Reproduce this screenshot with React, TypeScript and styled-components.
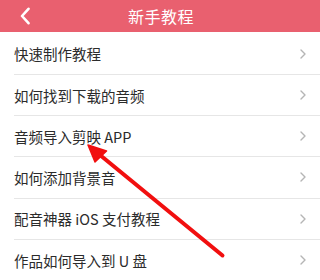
import React from "react";
import styled, { createGlobalStyle } from "styled-components";

const Global = createGlobalStyle`
  html, body { margin: 0; padding: 0; background: #fff; }
  body { font-family: "Noto Sans CJK SC", "Noto Sans", sans-serif; }
`;

const Page = styled.div`
  position: relative;
  width: 320px;
  height: 280px;
  overflow: hidden;
  background: #fff;
`;

const Header = styled.header`
  height: 32px;
  background: #e9606f;
  display: flex;
  align-items: center;
  justify-content: center;
  position: relative;
`;

const BackButton = styled.button`
  position: absolute;
  left: 14px;
  top: 4px;
  width: 22px;
  height: 24px;
  border: 0;
  padding: 0;
  background: transparent;
  display: flex;
  align-items: center;
  justify-content: center;
`;

const Title = styled.h1`
  margin: 0;
  color: #fff;
  font-size: 16px;
  font-weight: 400;
  letter-spacing: 0.5px;
  padding-left: 2px;
`;

const List = styled.ul`
  list-style: none;
  margin: 0;
  padding: 1.5px 0 0 0;
`;

const Row = styled.li`
  height: 40.25px;
  margin-left: 14px;
  padding-right: 13px;
  border-bottom: 1px solid #e6e6e6;
  display: flex;
  align-items: center;
  justify-content: space-between;
`;

const Label = styled.span`
  color: #2b2b2b;
  font-size: 14.5px;
  line-height: 1;
  padding-top: 2px;
`;

const ArrowOverlay = styled.svg`
  position: absolute;
  left: 0;
  top: 0;
  pointer-events: none;
`;

const Chevron = () => (
  <svg width="8" height="12" viewBox="0 0 8 12">
    <path d="M2 2 L6 6 L2 10" fill="none" stroke="#b5b5b5" strokeWidth="1.4" strokeLinecap="round" strokeLinejoin="round" />
  </svg>
);

const items = [
  "快速制作教程",
  "如何找到下载的音频",
  "音频导入剪映 APP",
  "如何添加背景音",
  "配音神器 iOS 支付教程",
  "作品如何导入到 U 盘",
];

export default function App() {
  return (
    <Page>
      <Global />
      <Header>
        <BackButton aria-label="back">
          <svg width="14" height="18" viewBox="0 0 14 18">
            <path d="M10.5 1.8 L4 9 L10.5 16.2" fill="none" stroke="#fff" strokeWidth="2.6" strokeLinecap="round" strokeLinejoin="round" />
          </svg>
        </BackButton>
        <Title>新手教程</Title>
      </Header>
      <List>
        {items.map((t) => (
          <Row key={t}>
            <Label>{t}</Label>
            <Chevron />
          </Row>
        ))}
      </List>
      <ArrowOverlay width="320" height="280" viewBox="0 0 320 280">
        <line x1="100" y1="155" x2="222.5" y2="255.5" stroke="#f10f0f" strokeWidth="4" strokeLinecap="round" />
        <polygon points="88,145 106.5,151 95,162" fill="#f10f0f" stroke="#f10f0f" strokeWidth="1.5" strokeLinejoin="round" />
      </ArrowOverlay>
    </Page>
  );
}
